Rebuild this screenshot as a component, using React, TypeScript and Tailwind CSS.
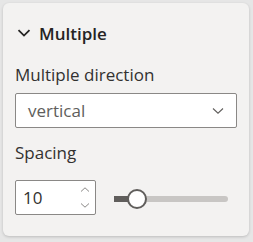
import React from "react";

export default function App() {
  return (
    <div
      className="w-[253px] h-[242px] bg-[#e6e6e6] pt-[3px] pl-[3px]"
      style={{ fontFamily: '"Open Sans", "Noto Sans", sans-serif' }}
    >
      <div className="w-[246px] h-[233px] bg-[#f3f2f1] rounded-[6px] shadow-[0_1px_3px_rgba(0,0,0,0.18)] flex flex-col px-[12px]">
        <div className="flex items-start mt-[19px] h-[24px]">
          <svg width="16" height="24" viewBox="0 0 16 24" className="ml-[1px]">
            <path d="M2.5 8.2 L8 13.6 L13.5 8.2" fill="none" stroke="#252423" strokeWidth="1.8" />
          </svg>
          <span className="ml-[7px] text-[17px] font-semibold text-[#252423] leading-[24px]">Multiple</span>
        </div>
        <div className="mt-[17px] text-[17px] text-[#323130] leading-[24px]">Multiple direction</div>
        <div className="mt-[6px] h-[35px] w-[222px] border border-[#8a8886] rounded-[2px] bg-white flex items-center justify-between pl-[12px] pr-[12px]">
          <span className="text-[17px] text-[#605e5c] leading-[24px]">vertical</span>
          <svg width="12" height="8" viewBox="0 0 12 8">
            <path d="M1 1.5 L6 6.2 L11 1.5" fill="none" stroke="#605e5c" strokeWidth="1.1" />
          </svg>
        </div>
        <div className="mt-[13px] text-[17px] text-[#323130] leading-[24px]">Spacing</div>
        <div className="mt-[15px] flex items-start">
          <div className="h-[35px] w-[81px] border border-[#8a8886] rounded-[2px] bg-white flex items-center justify-between pl-[7px] pr-[5px]">
            <span className="text-[17px] text-[#323130] leading-[24px]">10</span>
            <div className="flex flex-col gap-[11px]">
              <svg width="10" height="5" viewBox="0 0 10 5">
                <path d="M1 4.5 L5 0.8 L9 4.5" fill="none" stroke="#8a8886" strokeWidth="1" />
              </svg>
              <svg width="10" height="5" viewBox="0 0 10 5">
                <path d="M1 0.5 L5 4.2 L9 0.5" fill="none" stroke="#8a8886" strokeWidth="1" />
              </svg>
            </div>
          </div>
          <div className="relative ml-[18px] mt-[9px] w-[114px] h-[20px] flex items-center">
            <div className="w-full h-[6px] rounded-r-[3px] bg-[#c8c6c4] flex">
              <div className="w-[16px] h-full bg-[#605e5c]" />
            </div>
            <div className="absolute left-[13px] top-0 w-[20px] h-[20px] rounded-full bg-white border-2 border-[#605e5c]" />
          </div>
        </div>
      </div>
    </div>
  );
}
